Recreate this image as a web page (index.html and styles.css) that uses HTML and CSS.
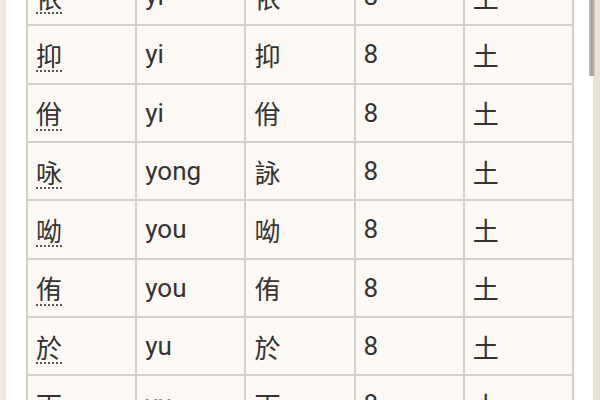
FILE: index.html
```html
<!DOCTYPE html>
<html lang="zh">
<head>
<meta charset="utf-8">
<link rel="stylesheet" href="styles.css">
</head>
<body>
<div class="page">
  <div class="edge-left"></div>
  <div class="content">
    <table class="chars">
      <tbody>
        <tr><td><span class="han">依</span></td><td>yi</td><td>依</td><td>8</td><td>土</td></tr>
        <tr><td><span class="han">抑</span></td><td>yi</td><td>抑</td><td>8</td><td>土</td></tr>
        <tr><td><span class="han">佾</span></td><td>yi</td><td>佾</td><td>8</td><td>土</td></tr>
        <tr><td><span class="han">咏</span></td><td>yong</td><td>詠</td><td>8</td><td>土</td></tr>
        <tr><td><span class="han">呦</span></td><td>you</td><td>呦</td><td>8</td><td>土</td></tr>
        <tr><td><span class="han">侑</span></td><td>you</td><td>侑</td><td>8</td><td>土</td></tr>
        <tr><td><span class="han">於</span></td><td>yu</td><td>於</td><td>8</td><td>土</td></tr>
        <tr><td><span class="han">雨</span></td><td class="muted">yu</td><td>雨</td><td>8</td><td>土</td></tr>
      </tbody>
    </table>
  </div>
  <div class="edge-right"></div>
  <div class="thumb"></div>
</div>
</body>
</html>
```

FILE: styles.css
```css
html, body {
  margin: 0;
  padding: 0;
  height: 100%;
  overflow: hidden;
  background: #ffffff;
}
.page {
  position: relative;
  display: flex;
  width: 600px;
  height: 400px;
  overflow: hidden;
}
.edge-left {
  width: 6px;
  flex: none;
  background: #efe8e4;
}
.content {
  flex: 1;
  background: #ffffff;
  padding-left: 20px;
}
.edge-right {
  width: 7px;
  flex: none;
  background: #ebe1d6;
}
.thumb {
  position: absolute;
  left: 589px;
  top: 0;
  width: 6px;
  height: 76px;
  background: linear-gradient(to right, #cfc8c0, #a59d95 40%, #b5ada5 70%, #d8d0c6);
}
.chars {
  border-collapse: collapse;
  table-layout: fixed;
  width: 548px;
  margin-top: -34px;
  background: #fdf9f5;
  font-family: Roboto, "Noto Sans CJK SC", sans-serif;
  font-size: 26px;
  color: #333333;
}
.chars tr {
  height: 58.33px;
}
.chars td {
  border: 2px solid #d4d0cb;
  padding: 0 0 0 8px;
  vertical-align: middle;
  white-space: nowrap;
}
.han {
  text-decoration: underline dotted #555555;
  text-decoration-thickness: 2px;
  text-underline-offset: 5px;
}
.muted {
  color: #8a8682;
}
```
